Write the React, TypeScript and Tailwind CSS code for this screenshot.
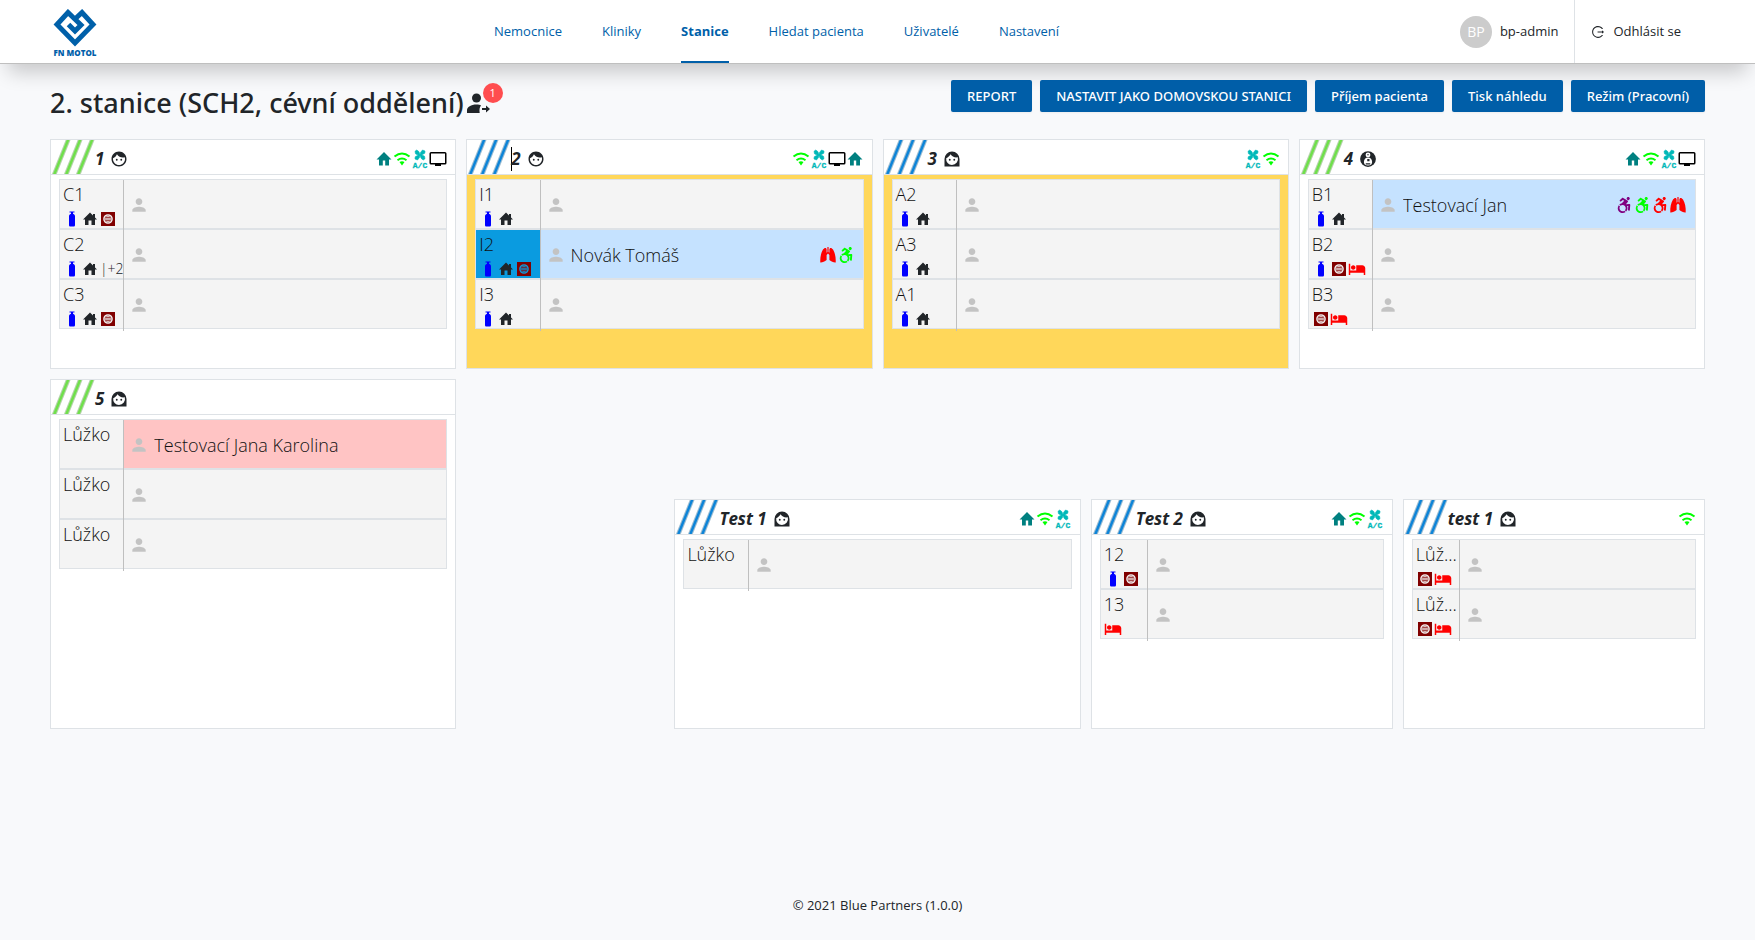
import React from "react";
import { MdFace, MdPerson, MdHotel } from "react-icons/md";
import { FaAccessibleIcon } from "react-icons/fa";
import { AiOutlineLogout } from "react-icons/ai";

type EquipName = "bottle" | "home" | "circuit" | "bed" | "more";
type RoomIconName = "home" | "wifi" | "ac" | "monitor";
type PatientIcon = "lungs" | "wheelPurple" | "wheelGreen" | "wheelRed";

interface Bed {
  name: string;
  equipment?: EquipName[];
  patient?: string;
  gender?: "m" | "f";
  selected?: boolean;
  icons?: PatientIcon[];
}

interface Room {
  name: string;
  stripe: "green" | "blue";
  face: "man" | "woman" | "child";
  icons: RoomIconName[];
  beds: Bed[];
  place: string;
  highlighted?: boolean;
  caret?: boolean;
}

const rooms: Room[] = [
  {
    name: "1", stripe: "green", face: "man", icons: ["home", "wifi", "ac", "monitor"],
    place: "col-start-1 col-span-4 row-start-1 row-span-2",
    beds: [
      { name: "C1", equipment: ["bottle", "home", "circuit"] },
      { name: "C2", equipment: ["bottle", "home", "more"] },
      { name: "C3", equipment: ["bottle", "home", "circuit"] },
    ],
  },
  {
    name: "2", stripe: "blue", face: "man", icons: ["wifi", "ac", "monitor", "home"], highlighted: true, caret: true,
    place: "col-start-5 col-span-4 row-start-1 row-span-2",
    beds: [
      { name: "I1", equipment: ["bottle", "home"] },
      { name: "I2", equipment: ["bottle", "home", "circuit"], patient: "Novák Tomáš", gender: "m", selected: true, icons: ["lungs", "wheelGreen"] },
      { name: "I3", equipment: ["bottle", "home"] },
    ],
  },
  {
    name: "3", stripe: "blue", face: "woman", icons: ["ac", "wifi"], highlighted: true,
    place: "col-start-9 col-span-4 row-start-1 row-span-2",
    beds: [
      { name: "A2", equipment: ["bottle", "home"] },
      { name: "A3", equipment: ["bottle", "home"] },
      { name: "A1", equipment: ["bottle", "home"] },
    ],
  },
  {
    name: "4", stripe: "green", face: "child", icons: ["home", "wifi", "ac", "monitor"],
    place: "col-start-13 col-span-4 row-start-1 row-span-2",
    beds: [
      { name: "B1", equipment: ["bottle", "home"], patient: "Testovací Jan", gender: "m", icons: ["wheelPurple", "wheelGreen", "wheelRed", "lungs"] },
      { name: "B2", equipment: ["bottle", "circuit", "bed"] },
      { name: "B3", equipment: ["circuit", "bed"] },
    ],
  },
  {
    name: "5", stripe: "green", face: "woman", icons: [],
    place: "col-start-1 col-span-4 row-start-3 row-span-3",
    beds: [
      { name: "Lůžko", patient: "Testovací Jana Karolina", gender: "f" },
      { name: "Lůžko" },
      { name: "Lůžko" },
    ],
  },
  {
    name: "Test 1", stripe: "blue", face: "woman", icons: ["home", "wifi", "ac"],
    place: "col-start-7 col-span-4 row-start-4 row-span-2",
    beds: [{ name: "Lůžko" }],
  },
  {
    name: "Test 2", stripe: "blue", face: "woman", icons: ["home", "wifi", "ac"],
    place: "col-start-11 col-span-3 row-start-4 row-span-2",
    beds: [
      { name: "12", equipment: ["bottle", "circuit"] },
      { name: "13", equipment: ["bed"] },
    ],
  },
  {
    name: "test 1", stripe: "blue", face: "woman", icons: ["wifi"],
    place: "col-start-14 col-span-3 row-start-4 row-span-2",
    beds: [
      { name: "Lůž...", equipment: ["circuit", "bed"] },
      { name: "Lůž...", equipment: ["circuit", "bed"] },
    ],
  },
];

function Logo() {
  return (
    <svg viewBox="0 0 44 48" className="h-12 w-11" role="img" aria-label="FN Motol">
      <path
        d="M22 10 L29 3.500 L40 15.500 L22 34 L4 15.500 L15 3.500 L28 16 L22 22 L15.500 15.500"
        fill="none" stroke="#0060a9" strokeWidth="5"
      />
      <text x="22" y="47" textAnchor="middle" fontSize="8" fontWeight="800" fill="#0060a9" fontFamily="Open Sans, sans-serif">
        FN MOTOL
      </text>
    </svg>
  );
}

function Stripes({ color }: { color: "green" | "blue" }) {
  const main = color === "green" ? "#6fe04a" : "#0d84d8";
  const edge = color === "green" ? "#b5d3ab" : "#9dbdd2";
  return (
    <svg viewBox="0 0 44 34" className="h-[34px] w-11 shrink-0" aria-hidden="true">
      {[0, 12, 24].map((x) => (
        <g key={x}>
          <path d={`M${x + 3} 35 L${x + 17.5} -1`} stroke={edge} strokeWidth="4.500" />
          <path d={`M${x + 3} 35 L${x + 17.5} -1`} stroke={main} strokeWidth="2.400" />
        </g>
      ))}
    </svg>
  );
}

function FaceIcon({ kind }: { kind: Room["face"] }) {
  if (kind === "man") return <MdFace className="size-[18px]" />;
  if (kind === "woman") {
    return (
      <svg viewBox="0 0 24 24" className="size-[18px]" fill="currentColor">
        <path
          fillRule="evenodd"
          d="M2 22V12a10 10 0 0 1 20 0v10zM12 20a8 8 0 0 0 7.700-10.200c-4.200.6-7.700-.8-9.700-4-1.200 2.400-3.200 4.200-5.700 5.100A8 8 0 0 0 12 20z"
        />
        <circle cx="9" cy="13" r="1.250" />
        <circle cx="15" cy="13" r="1.250" />
      </svg>
    );
  }
  return (
    <svg viewBox="0 0 24 24" className="size-[18px]">
      <circle cx="12" cy="12" r="10.500" fill="currentColor" />
      <circle cx="12" cy="6.500" r="3.200" fill="#fff" />
      <path d="M12 10c3.200 0 5.500 2.800 5.500 6s-2.300 4.800-5.500 4.800S6.500 19.200 6.500 16 8.800 10 12 10z" fill="#fff" />
      <path d="M11 5.500h2v1.500h-2zM11 12h3v3h-3zM9 17.500h6v1.800H9z" fill="currentColor" />
    </svg>
  );
}

function RoomIcon({ name }: { name: RoomIconName }) {
  switch (name) {
    case "home":
      return (
        <svg viewBox="0 0 18 18" className="size-[18px]" fill="#008080">
          <path d="M9 2 1.500 9.500H4V15.500h3.800v-5h2.400v5H14V9.500h2.500z" />
        </svg>
      );
    case "wifi":
      return (
        <svg viewBox="0 0 18 18" className="size-[18px]" fill="none" stroke="#00ff00" strokeWidth="2">
          <path d="M1.500 6.500Q9 .5 16.500 6.500M4.500 10.200Q9 6.800 13.500 10.200" />
          <path d="M6.500 12Q9 10.600 11.500 12L9 15.500z" fill="#00ff00" stroke="none" />
        </svg>
      );
    case "ac":
      return (
        <svg viewBox="0 0 18 20" className="h-5 w-[18px]" fill="#00b8b8">
          <path
            d="M9 6 7.500 6.300 4.500 4.800 4 2.300 5.800 1 8 2.800zM9 6 9.500 3.500 11.500 1 14 2 13.800 4.200 11.500 5.500zM9 6l1.500-.3 3 1.500.5 2.500-1.800 1.300-2.200-1.800zM9 6 8.500 8.500 6.500 11 4 10l.2-2.200 2.300-1.300z"
            stroke="#00b8b8" strokeWidth=".6" strokeLinejoin="round"
          />
          <text x="9" y="19" textAnchor="middle" fontSize="8" fontWeight="700" stroke="#00b8b8" strokeWidth=".3" fontFamily="Liberation Mono, monospace">A/C</text>
        </svg>
      );
    case "monitor":
      return (
        <svg viewBox="0 0 18 18" className="size-[18px]" fill="none" stroke="#000">
          <rect x="1.250" y="2.750" width="15.500" height="11" rx=".8" strokeWidth="1.500" />
          <path d="M6 15h6" strokeWidth="2" />
        </svg>
      );
  }
}

function EquipmentIcon({ name }: { name: EquipName }) {
  switch (name) {
    case "bottle":
      return (
        <svg viewBox="0 0 18 16" className="h-4 w-[18px] shrink-0" fill="#0000ff">
          <path d="M6.500.5h5v1H10v1.200c1.300.4 2 1.300 2 2.600V14c0 1-.6 1.500-1.500 1.500h-3C6.600 15.500 6 15 6 14V5.300C6 4 6.700 3.100 8 2.700V1.500H6.500z" />
        </svg>
      );
    case "home":
      return (
        <svg viewBox="0 0 18 16" className="h-4 w-[18px] shrink-0" fill="currentColor">
          <path d="M9 1.500 2 8.500h2V14h3.500V9.500h3V14H14V8.500h2l-2-2V3h-2v1.500z" />
        </svg>
      );
    case "circuit":
      return (
        <svg viewBox="0 0 18 16" className="h-4 w-[18px] shrink-0">
          <path fillRule="evenodd" fill="#800000" d="M2 1h14v14H2zM9 3.200a4.800 4.800 0 1 0 0 9.600 4.800 4.800 0 0 0 0-9.600z" />
          <circle cx="9" cy="8" r="3.200" fill="none" stroke="#800000" strokeWidth=".5" />
          <path d="M6.500 6.800h5M6.500 9.200h5" stroke="#800000" strokeWidth="1" />
        </svg>
      );
    case "bed":
      return <MdHotel className="size-[18px] shrink-0 text-[#ff0000]" />;
    case "more":
      return <span className="pl-px text-sm font-light leading-4">|+2</span>;
  }
}

function PatientMark({ name }: { name: PatientIcon }) {
  switch (name) {
    case "lungs":
      return (
        <svg viewBox="0 0 18 18" className="size-[18px]" fill="#ff0000">
          <path d="M8.400 1h1.200v5l.8.7V3.500C10.400 1.500 12.500 1.200 14 3.500c2 3.200 3 8 2.700 13-2 .2-4.300-.8-6.300-2.500V9L9 7.500 7.600 9v5c-2 1.700-4.300 2.700-6.300 2.500C1 11.500 2 6.700 4 3.500 5.500 1.200 7.600 1.500 7.600 3.500v3.200l.8-.7z" />
        </svg>
      );
    case "wheelPurple":
      return <FaAccessibleIcon className="h-4 w-[18px] text-[#800080]" />;
    case "wheelGreen":
      return <FaAccessibleIcon className="h-4 w-[18px] text-[#00ff00]" />;
    case "wheelRed":
      return <FaAccessibleIcon className="h-4 w-[18px] text-[#ff0000]" />;
  }
}

function BedRow({ bed }: { bed: Bed }) {
  const tone = bed.gender === "m" ? "bg-[#c5e2ff]" : bed.gender === "f" ? "bg-[#ffc4c4]" : "";
  return (
    <li className="flex h-[50px] border border-[#dee2e6] bg-[#f4f4f4]">
      <div className="relative z-10 h-[51px] w-1/6 shrink-0 border-r border-[#bfbfbf]">
        <div className={`flex h-12 flex-col justify-between ${bed.selected ? "bg-[#0a9be0]" : ""}`}>
          <div className="whitespace-nowrap pl-[3px] text-[18px] font-light leading-7 text-[#111]">{bed.name}</div>
          <div className="flex h-[18px] items-center pl-[3px]">
            {bed.equipment?.map((e) => <EquipmentIcon key={e} name={e} />)}
          </div>
        </div>
      </div>
      <div className={`flex min-w-0 flex-1 items-center gap-[5px] pl-[5px] pr-2 pt-0.5 ${tone}`}>
        <MdPerson className="size-5 shrink-0 text-[#c3c3c3]" />
        {bed.patient && <span className="truncate text-[18px] font-light text-[#111]">{bed.patient}</span>}
        {bed.icons && (
          <span className="ml-auto flex items-center">
            {bed.icons.map((i) => <PatientMark key={i} name={i} />)}
          </span>
        )}
      </div>
    </li>
  );
}

function RoomCard({ room }: { room: Room }) {
  return (
    <section className={`flex min-w-0 flex-col border border-[#dee2e6] ${room.highlighted ? "bg-[#ffd75a]" : "bg-white"} ${room.place}`}>
      <header className="flex h-[35px] border-b border-[#dee2e6] bg-white pr-2">
        <Stripes color={room.stripe} />
        <div className="flex flex-1 items-center pt-[3px]">
          {room.caret && <span className="-mr-px h-6 w-px bg-black" />}
          <h2 className="mr-1.5 text-[17px] font-bold italic leading-6">{room.name}</h2>
          <FaceIcon kind={room.face} />
          <div className="ml-auto flex items-center">
            {room.icons.map((i) => <RoomIcon key={i} name={i} />)}
          </div>
        </div>
      </header>
      <ul className="px-2 pt-1">
        {room.beds.map((b, i) => <BedRow key={i} bed={b} />)}
      </ul>
    </section>
  );
}

const navItems = ["Nemocnice", "Kliniky", "Stanice", "Hledat pacienta", "Uživatelé", "Nastavení"];
const actions = ["REPORT", "NASTAVIT JAKO DOMOVSKOU STANICI", "Příjem pacienta", "Tisk náhledu", "Režim (Pracovní)"];

export default function App() {
  return (
    <div className="flex min-h-screen flex-col bg-[#f8f9fb] font-['Open_Sans',sans-serif] text-[13px] text-[#212529]">
      <header className="flex h-16 border-b border-[#bfbfbf] bg-white px-[50px] shadow-[0_16px_20px_-8px_rgba(0,0,0,0.2)]">
        <a href="#" className="flex w-[444px] items-center pl-[3px] pt-0.5"><Logo /></a>
        <nav className="flex gap-10">
          {navItems.map((n) => (
            <a
              key={n}
              href="#"
              className={`flex items-center border-b-2 pt-0.5 text-[#005fa9] ${n === "Stanice" ? "border-[#005fa9] font-bold" : "border-transparent"}`}
            >
              {n}
            </a>
          ))}
        </nav>
        <div className="ml-auto flex">
          <div className="flex items-center gap-2 border-r border-[#dee2e6] pr-4">
            <span className="flex size-8 items-center justify-center rounded-full bg-[#cccccc] text-sm text-white">BP</span>
            <span>bp-admin</span>
          </div>
          <button type="button" className="flex items-center gap-2 px-4 pr-6">
            <AiOutlineLogout className="size-3.5" />
            Odhlásit se
          </button>
        </div>
      </header>

      <main className="flex-1 px-[50px] pt-4">
        <div className="flex h-[59px] justify-between">
          <div className="flex h-[46px] items-center">
            <h1 className="font-['Noto_Sans',sans-serif] text-[27px] font-medium">2. stanice (SCH2, cévní oddělení)</h1>
            <div className="relative ml-[3px]">
              <svg viewBox="0 0 24 20" className="h-5 w-6" fill="currentColor">
                <circle cx="9.500" cy="5" r="4.500" />
                <path d="M0 20v-3c0-3 4-5.500 9.500-5.500 2 0 3.500.4 4.500 1-1.500 1.500-1.800 4.500-1.300 7.500zM15 15h4v-2.500l4 3.500-4 3.500V17h-4z" />
              </svg>
              <span className="absolute -top-2.5 left-4 flex size-5 items-center justify-center rounded-full bg-[#ff4d4f] text-[11px] text-white">1</span>
            </div>
          </div>
          <div className="flex gap-2">
            {actions.map((a) => (
              <button key={a} type="button" className="h-8 rounded-xs bg-[#005ea8] px-4 pt-px font-['Noto_Sans',sans-serif] font-medium text-white shadow-xs">{a}</button>
            ))}
          </div>
        </div>
        <div className="grid auto-rows-[110px] grid-cols-16 gap-2.5">
          {rooms.map((r, i) => <RoomCard key={i} room={r} />)}
        </div>
      </main>

      <footer className="py-6 text-center leading-[22px]">© 2021 Blue Partners (1.0.0)</footer>
    </div>
  );
}
